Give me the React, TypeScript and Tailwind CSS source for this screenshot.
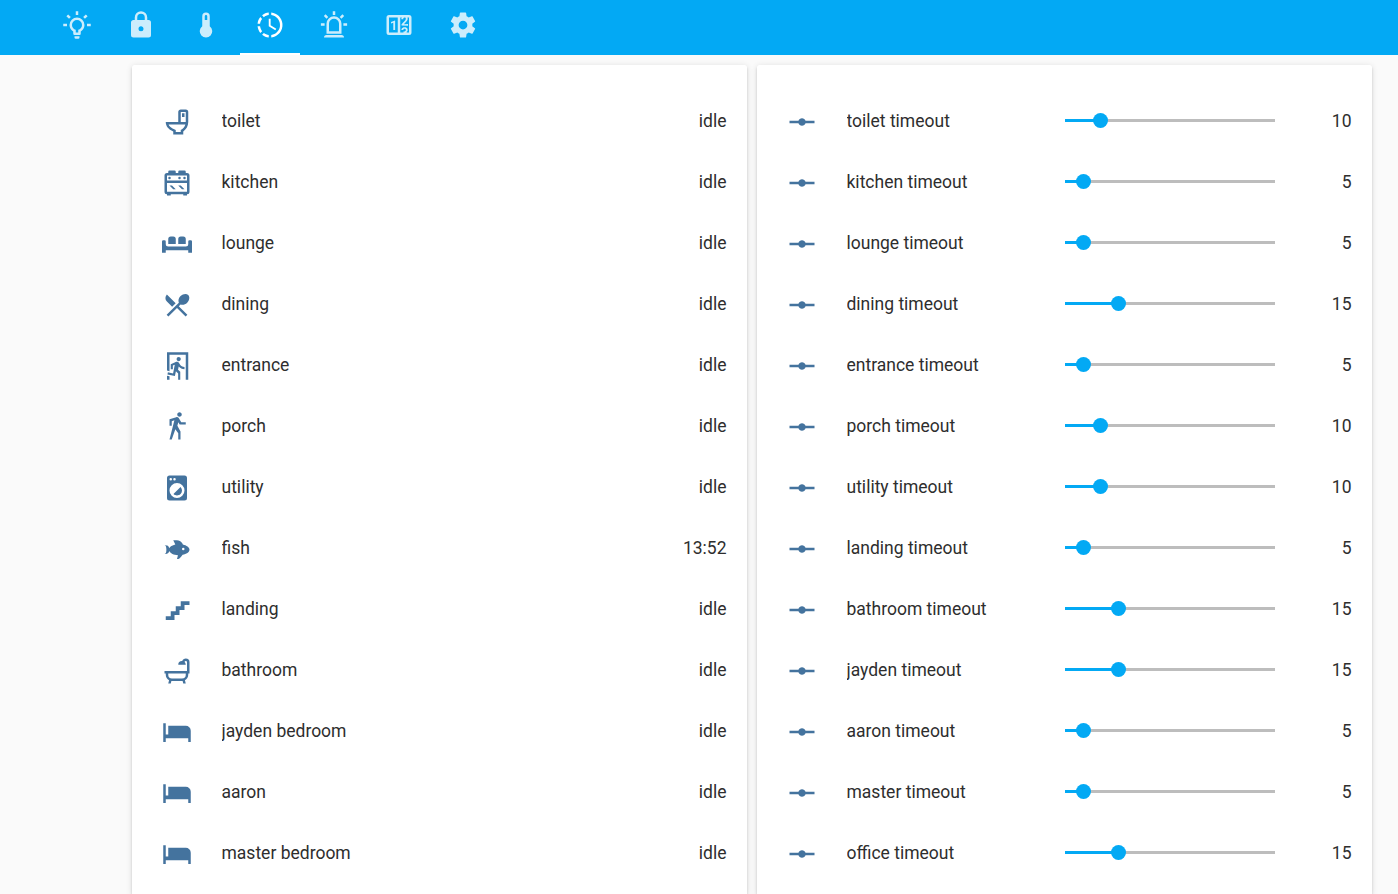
import type { ReactNode } from 'react';

const ICONS = {
  lightbulb:
    'M20,11H23V13H20V11M1,11H4V13H1V11M13,1V4H11V1H13M4.92,3.5L7.05,5.64L5.63,7.05L3.5,4.93L4.92,3.5M16.95,5.63L19.07,3.5L20.5,4.93L18.37,7.05L16.95,5.63M12,6A6,6 0 0,1 18,12C18,14.22 16.79,16.16 15,17.2V19A1,1 0 0,1 14,20H10A1,1 0 0,1 9,19V17.2C7.21,16.16 6,14.22 6,12A6,6 0 0,1 12,6M14,21V22A1,1 0 0,1 13,23H11A1,1 0 0,1 10,22V21H14M11,18H13V15.87C14.73,15.43 16,13.86 16,12A4,4 0 0,0 12,8A4,4 0 0,0 8,12C8,13.86 9.27,15.43 11,15.87V18Z',
  lock: 'M12,17A2,2 0 0,0 14,15C14,13.89 13.1,13 12,13A2,2 0 0,0 10,15A2,2 0 0,0 12,17M18,8A2,2 0 0,1 20,10V20A2,2 0 0,1 18,22H6A2,2 0 0,1 4,20V10C4,8.89 4.9,8 6,8H7V6A5,5 0 0,1 12,1A5,5 0 0,1 17,6V8H18M12,3A3,3 0 0,0 9,6V8H15V6A3,3 0 0,0 12,3Z',
  thermometer: 'M15 13V5A3 3 0 0 0 9 5V13A5 5 0 1 0 15 13M12 4A1 1 0 0 1 13 5V8H11V5A1 1 0 0 1 12 4Z',
  clock:
    'M13,2.03V2.05L13,4.05C17.39,4.59 20.5,8.58 19.96,12.97C19.5,16.61 16.64,19.5 13,19.93V21.93C18.5,21.38 22.5,16.5 21.95,11C21.5,6.25 17.73,2.5 13,2.03M11,2.06C9.05,2.25 7.19,3 5.67,4.26L7.1,5.74C8.22,4.84 9.57,4.26 11,4.06V2.06M4.26,5.67C3,7.19 2.25,9.04 2.05,11H4.05C4.24,9.58 4.8,8.23 5.69,7.1L4.26,5.67M2.06,13C2.26,14.96 3.03,16.81 4.27,18.33L5.69,16.9C4.81,15.77 4.24,14.42 4.06,13H2.06M7.1,18.37L5.67,19.74C7.18,21 9.04,21.79 11,22V20C9.58,19.82 8.23,19.25 7.1,18.37M12.5,7V12.25L17,14.92L16.25,16.15L11,13V7H12.5Z',
  alarm:
    'M6,6.9L3.87,4.78L5.28,3.37L7.4,5.5L6,6.9M13,1V4H11V1H13M20.13,4.78L18,6.9L16.6,5.5L18.72,3.37L20.13,4.78M4.5,10.5V12.5H1.5V10.5H4.5M19.5,10.5H22.5V12.5H19.5V10.5M6,20H18A2,2 0 0,1 20,22H4A2,2 0 0,1 6,20M12,5A6,6 0 0,1 18,11V19H6V11A6,6 0 0,1 12,5M12,7A4,4 0 0,0 8,11V17H16V11A4,4 0 0,0 12,7Z',
  counter:
    'M4,4H20A2,2 0 0,1 22,6V18A2,2 0 0,1 20,20H4A2,2 0 0,1 2,18V6A2,2 0 0,1 4,4M4,6V18H11V6H4M20,18V6H18.76C19,6.54 18.95,7.07 18.95,7.13C18.88,7.8 18.41,8.5 18.24,8.75L15.91,11.3L19.23,11.28L19.24,12.5L14.04,12.47L14,11.47C14,11.47 17.05,8.24 17.2,7.95C17.34,7.67 17.91,6 16.5,6C15.27,6.05 15.41,7.3 15.41,7.3L13.87,7.31C13.87,7.31 13.88,6.65 14.25,6H13V18H15.58L15.57,17.14L16.54,17.13C16.54,17.13 17.45,16.97 17.46,16.08C17.5,15.08 16.65,15.08 16.5,15.08C16.37,15.08 15.43,15.13 15.43,15.95H13.91C13.91,15.95 13.95,13.89 16.5,13.89C19.1,13.89 18.96,15.91 18.96,15.91C18.96,15.91 19,17.16 17.85,17.63L18.37,18H20M8.92,16H7.42V10.2L5.62,10.76V9.53L8.76,8.41H8.92V16Z',
  cog: 'M12,15.5A3.5,3.5 0 0,1 8.5,12A3.5,3.5 0 0,1 12,8.5A3.5,3.5 0 0,1 15.5,12A3.5,3.5 0 0,1 12,15.5M19.43,12.97C19.47,12.65 19.5,12.33 19.5,12C19.5,11.67 19.47,11.34 19.43,11L21.54,9.37C21.73,9.22 21.78,8.95 21.66,8.73L19.66,5.27C19.54,5.05 19.27,4.96 19.05,5.05L16.56,6.05C16.04,5.66 15.5,5.32 14.87,5.07L14.5,2.42C14.46,2.18 14.25,2 14,2H10C9.75,2 9.54,2.18 9.5,2.42L9.13,5.07C8.5,5.32 7.96,5.66 7.44,6.05L4.95,5.05C4.73,4.96 4.46,5.05 4.34,5.27L2.34,8.73C2.21,8.95 2.27,9.22 2.46,9.37L4.57,11C4.53,11.34 4.5,11.67 4.5,12C4.5,12.33 4.53,12.65 4.57,12.97L2.46,14.63C2.27,14.78 2.21,15.05 2.34,15.27L4.34,18.73C4.46,18.95 4.73,19.03 4.95,18.95L7.44,17.94C7.96,18.34 8.5,18.68 9.13,18.93L9.5,21.58C9.54,21.82 9.75,22 10,22H14C14.25,22 14.46,21.82 14.5,21.58L14.87,18.93C15.5,18.67 16.04,18.34 16.56,17.94L19.05,18.95C19.27,19.03 19.54,18.95 19.66,18.73L21.66,15.27C21.78,15.05 21.73,14.78 21.54,14.63L19.43,12.97Z',
  toilet:
    'M9,22H17V19.5C19.41,17.87 21,15.12 21,12V4A2,2 0 0,0 19,2H15C13.89,2 13,2.9 13,4V12H3C3,15.09 5,17.97 9,19.5V22M5.29,14H18.71C18.14,15.91 16.77,17.53 15,18.33V20H11V18.33C9,17.53 5.86,15.91 5.29,14M15,4H19V12H15V4M16,5V8H18V5H16Z',
  stove:
    'M6,14H8L11,17H9L6,14M4,4H5V3A1,1 0 0,1 6,2H10A1,1 0 0,1 11,3V4H13V3A1,1 0 0,1 14,2H18A1,1 0 0,1 19,3V4H20A2,2 0 0,1 22,6V19A2,2 0 0,1 20,21V22H17V21H7V22H4V21A2,2 0 0,1 2,19V6A2,2 0 0,1 4,4M18,7A1,1 0 0,1 19,8A1,1 0 0,1 18,9A1,1 0 0,1 17,8A1,1 0 0,1 18,7M14,7A1,1 0 0,1 15,8A1,1 0 0,1 14,9A1,1 0 0,1 13,8A1,1 0 0,1 14,7M20,6H4V10H20V6M4,19H20V12H4V19M6,7A1,1 0 0,1 7,8A1,1 0 0,1 6,9A1,1 0 0,1 5,8A1,1 0 0,1 6,7M13,14H15L18,17H16L13,14Z',
  sofa: 'M7,6H9A2,2 0 0,1 11,8V12H5V8A2,2 0 0,1 7,6M15,6H17A2,2 0 0,1 19,8V12H13V8A2,2 0 0,1 15,6M1,9H2A1,1 0 0,1 3,10V12A2,2 0 0,0 5,14H19A2,2 0 0,0 21,12V11L21,10A1,1 0 0,1 22,9H23A1,1 0 0,1 24,10V19H21V17H3V19H0V10A1,1 0 0,1 1,9Z',
  silverware:
    'M8.1,13.34L3.91,9.16C2.35,7.59 2.35,5.06 3.91,3.5L10.93,10.5L8.1,13.34M14.88,11.53L13.41,13L20.29,19.88L18.88,21.29L12,14.41L5.12,21.29L3.71,19.88L13.47,10.12C12.76,8.59 13.26,6.44 14.85,4.85C16.76,2.93 19.5,2.57 20.96,4.03C22.43,5.5 22.07,8.24 20.15,10.15C18.56,11.74 16.41,12.24 14.88,11.53Z',
  exit: 'M13.34,8.17C12.41,8.17 11.65,7.4 11.65,6.47A1.69,1.69 0 0,1 13.34,4.78C14.28,4.78 15.04,5.54 15.04,6.47C15.04,7.4 14.28,8.17 13.34,8.17M10.3,19.93L4.37,18.75L4.71,17.05L8.86,17.9L10.21,11.04L8.69,11.64V14.5H7V10.54L11.4,8.67L12.07,8.59C12.67,8.59 13.17,8.93 13.5,9.44L14.36,10.79C15.04,12 16.39,12.82 18,12.82V14.5C16.14,14.5 14.44,13.67 13.34,12.4L12.84,14.94L14.61,16.63V23H12.92V17.9L11.14,16.21L10.3,19.93M21,23H19V3H6V16.11L4,15.69V1H21V23M6,23H4V19.78L6,20.2V23Z',
  walk: 'M14.12,10H19V8.2H15.38L13.38,4.87C13.08,4.37 12.54,4.03 11.92,4.03C11.74,4.03 11.58,4.06 11.42,4.11L6,5.8V11H7.8V7.33L9.91,6.67L6,22H7.8L10.67,13.89L13,17V22H14.8V15.59L12.31,11.05L13.04,8.18M14,3.8C15,3.8 15.8,3 15.8,2C15.8,1 15,0.2 14,0.2C13,0.2 12.2,1 12.2,2C12.2,3 13,3.8 14,3.8Z',
  washer:
    'M14.83,11.17C16.39,12.73 16.39,15.27 14.83,16.83C13.27,18.39 10.73,18.39 9.17,16.83L14.83,11.17M6,2H18A2,2 0 0,1 20,4V20A2,2 0 0,1 18,22H6A2,2 0 0,1 4,20V4A2,2 0 0,1 6,2M7,4A1,1 0 0,0 6,5A1,1 0 0,0 7,6A1,1 0 0,0 8,5A1,1 0 0,0 7,4M10,4A1,1 0 0,0 9,5A1,1 0 0,0 10,6A1,1 0 0,0 11,5A1,1 0 0,0 10,4M12,8A6,6 0 0,0 6,14A6,6 0 0,0 12,20A6,6 0 0,0 18,14A6,6 0 0,0 12,8Z',
  fish: 'M12,20L12.76,17C9.5,16.79 6.59,15.4 5.75,13.58C5.66,14.06 5.53,14.5 5.33,14.83C4.67,16 3.33,16 2,16C3.1,16 3.5,14.43 3.5,12.5C3.5,10.57 3.1,9 2,9C3.33,9 4.67,9 5.33,10.17C5.53,10.5 5.66,10.94 5.75,11.42C6.4,10 8.32,8.85 10.66,8.32L9,5C11,5 13,5 14.33,5.67C15.46,6.23 16.11,7.27 16.69,8.38C19.61,9.08 22,10.66 22,12.5C22,14.38 19.5,16 16.5,16.66C15.67,17.76 14.86,18.78 14.17,19.33C13.33,20 12.67,20 12,20M17,11A1,1 0 0,0 16,12A1,1 0 0,0 17,13A1,1 0 0,0 18,12A1,1 0 0,0 17,11Z',
  stairs: 'M15,5V9H11V13H7V17H3V20H10V16H14V12H18V8H22V5H15Z',
  bath: 'M21,14V15C21,16.91 19.93,18.57 18.35,19.41L19,22H17L16.5,20C16.33,20 16.17,20 16,20H8C7.83,20 7.67,20 7.5,20L7,22H5L5.65,19.41C4.07,18.57 3,16.91 3,15V14H2V12H20V5A1,1 0 0,0 19,4C18.5,4 18.12,4.34 18,4.79C18.63,5.33 19,6.13 19,7H13A3,3 0 0,1 16,4C16.06,4 16.11,4 16.17,4C16.58,2.83 17.69,2 19,2A3,3 0 0,1 22,5V14H21M19,14H5V15A3,3 0 0,0 8,18H16A3,3 0 0,0 19,15V14Z',
  bed: 'M19,7H5V14H3V5H1V20H3V17H21V20H23V11A4,4 0 0,0 19,7',
  vertex:
    'M2,11H9.17C9.58,9.83 10.69,9 12,9C13.31,9 14.42,9.83 14.83,11H22V13H14.83C14.42,14.17 13.31,15 12,15C10.69,15 9.58,14.17 9.17,13H2V11Z',
};

type IconName = keyof typeof ICONS;

function Icon({ name }: { name: IconName }) {
  return (
    <svg viewBox="0 0 24 24" className="size-[30px] shrink-0 fill-current" aria-hidden="true">
      <path d={ICONS[name]} />
    </svg>
  );
}

const TABS: IconName[] = ['lightbulb', 'lock', 'thermometer', 'clock', 'alarm', 'counter', 'cog'];
const ACTIVE_TAB: IconName = 'clock';

const TIMERS: { icon: IconName; name: string; state: string }[] = [
  { icon: 'toilet', name: 'toilet', state: 'idle' },
  { icon: 'stove', name: 'kitchen', state: 'idle' },
  { icon: 'sofa', name: 'lounge', state: 'idle' },
  { icon: 'silverware', name: 'dining', state: 'idle' },
  { icon: 'exit', name: 'entrance', state: 'idle' },
  { icon: 'walk', name: 'porch', state: 'idle' },
  { icon: 'washer', name: 'utility', state: 'idle' },
  { icon: 'fish', name: 'fish', state: '13:52' },
  { icon: 'stairs', name: 'landing', state: 'idle' },
  { icon: 'bath', name: 'bathroom', state: 'idle' },
  { icon: 'bed', name: 'jayden bedroom', state: 'idle' },
  { icon: 'bed', name: 'aaron', state: 'idle' },
  { icon: 'bed', name: 'master bedroom', state: 'idle' },
];

const TIMEOUTS: { name: string; value: number }[] = [
  { name: 'toilet timeout', value: 10 },
  { name: 'kitchen timeout', value: 5 },
  { name: 'lounge timeout', value: 5 },
  { name: 'dining timeout', value: 15 },
  { name: 'entrance timeout', value: 5 },
  { name: 'porch timeout', value: 10 },
  { name: 'utility timeout', value: 10 },
  { name: 'landing timeout', value: 5 },
  { name: 'bathroom timeout', value: 15 },
  { name: 'jayden timeout', value: 15 },
  { name: 'aaron timeout', value: 5 },
  { name: 'master timeout', value: 5 },
  { name: 'office timeout', value: 15 },
];

const TRACK_WIDTH = 210;
const MAX_TIMEOUT = 60;

function Slider({ value }: { value: number }) {
  // Snapped so that the 15px knob lands on whole pixels.
  const position = Math.round((value * TRACK_WIDTH) / MAX_TIMEOUT) + 0.5;
  return (
    <div className="relative flex h-[15px] w-[210px] items-center">
      <div className="h-[3px] w-full bg-[#bdbdbd]">
        <div className="h-full bg-[#03a9f4]" style={{ width: position }} />
      </div>
      <div
        className="absolute top-0 -ml-[7.5px] size-[15px] rounded-full bg-[#03a9f4]"
        style={{ left: position }}
      />
    </div>
  );
}

function Card({ children }: { children: ReactNode }) {
  return (
    <section className="w-[615px] rounded-t-[2.5px] bg-white pt-[25px] pr-5 pl-[30px] shadow-[0_2.5px_2.5px_0_rgba(0,0,0,0.14),0_1.25px_6.25px_0_rgba(0,0,0,0.12),0_3.75px_1.25px_-2.5px_rgba(0,0,0,0.2)]">
      {children}
    </section>
  );
}

function Row({ icon, name, children }: { icon: IconName; name: string; children: ReactNode }) {
  return (
    <div className="flex h-[61px] items-center">
      <div className="mt-[3px] text-[#44739e]">
        <Icon name={icon} />
      </div>
      <div className="ml-[29.5px] flex-1 truncate pt-[2px]">{name}</div>
      {children}
    </div>
  );
}

export default function App() {
  return (
    <div className="flex h-[894px] w-[1398px] flex-col overflow-hidden bg-[#fafafa] font-['Roboto','Noto_Sans',sans-serif] text-[17.5px] leading-[25px] text-[#2e2e2e]">
      <header className="h-[55px] shrink-0 bg-[#03a9f4] pl-[47px] text-white">
        <nav className="flex h-full gap-[4.33px]">
          {TABS.map((tab) => (
            <button
              key={tab}
              className={
                tab === ACTIVE_TAB
                  ? 'flex w-[60px] justify-center border-b-2 border-white pt-[10px]'
                  : 'flex w-[60px] justify-center pt-[10px]'
              }
            >
              <span className={tab === ACTIVE_TAB ? 'block' : 'block opacity-80'}>
                <Icon name={tab} />
              </span>
            </button>
          ))}
        </nav>
      </header>
      <main className="flex min-h-0 flex-1 gap-[10px] pt-[10px] pl-[132px]">
        <Card>
          {TIMERS.map((timer) => (
            <Row key={timer.name} icon={timer.icon} name={timer.name}>
              <div className="pt-[2px] pr-[0.5px]">{timer.state}</div>
            </Row>
          ))}
        </Card>
        <Card>
          {TIMEOUTS.map((timeout) => (
            <Row key={timeout.name} icon="vertex" name={timeout.name}>
              <Slider value={timeout.value} />
              <div className="w-[77px] pt-[2px] pr-[0.5px] text-right">{timeout.value}</div>
            </Row>
          ))}
        </Card>
      </main>
    </div>
  );
}
